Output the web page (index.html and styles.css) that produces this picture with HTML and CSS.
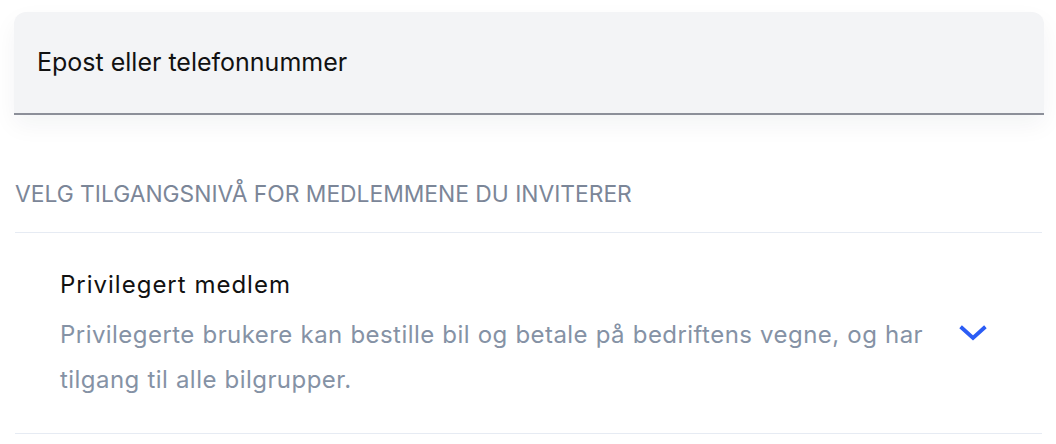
FILE: index.html
```html
<!DOCTYPE html>
<html lang="no">
<head>
<meta charset="utf-8">
<link rel="stylesheet" href="styles.css">
</head>
<body>
<div class="page">
  <div class="field">
    <span class="placeholder">Epost eller telefonnummer</span>
  </div>
  <div class="section-title">VELG TILGANGSNIVÅ FOR MEDLEMMENE DU INVITERER</div>
  <div class="option">
    <div class="option-text">
      <div class="option-name">Privilegert medlem</div>
      <div class="option-desc">Privilegerte brukere kan bestille bil og betale på bedriftens vegne, og har tilgang til alle bilgrupper.</div>
    </div>
    <svg class="chevron" width="30" height="20" viewBox="0 0 30 20"><path d="M4 5 L15 15 L26 5" fill="none" stroke="#2b5cf5" stroke-width="3.8" stroke-linecap="square"/></svg>
  </div>
</div>
</body>
</html>
```
FILE: styles.css
```css
html, body {
  margin: 0;
  padding: 0;
  background: #fff;
}
.page {
  padding: 12px 12px 0 14px;
  font-family: Inter, "Noto Sans", sans-serif;
}
.field {
  width: 1030px;
  height: 101px;
  background: #f3f4f6;
  border-radius: 12px 12px 0 0;
  border-bottom: 2px solid #8c8f99;
  box-shadow: 0 10px 24px rgba(20, 30, 60, 0.05);
  display: flex;
  align-items: center;
}
.placeholder {
  margin-left: 23px;
  margin-top: -2px;
  font-size: 25px;
  color: #111;
}
.section-title {
  margin-top: 65px;
  margin-left: 1px;
  font-size: 22.8px;
  color: #7b8698;
  padding-bottom: 25px;
  border-bottom: 1px solid #e6ebf3;
  width: 1027px;
}
.option {
  margin-left: 1px;
  width: 1027px;
  border-bottom: 1px solid #e6ebf3;
  display: flex;
  align-items: flex-start;
  padding: 37px 0 31px;
}
.option-text {
  padding-left: 45px;
  width: 880px;
}
.option-name {
  font-size: 24px;
  letter-spacing: 1px;
  color: #111;
  margin-bottom: 13px;
}
.option-desc {
  font-size: 24px;
  letter-spacing: 0.45px;
  word-spacing: 0.5px;
  line-height: 45px;
  color: #8592a5;
}
.chevron {
  margin-left: 18px;
  margin-top: 53px;
}
```
